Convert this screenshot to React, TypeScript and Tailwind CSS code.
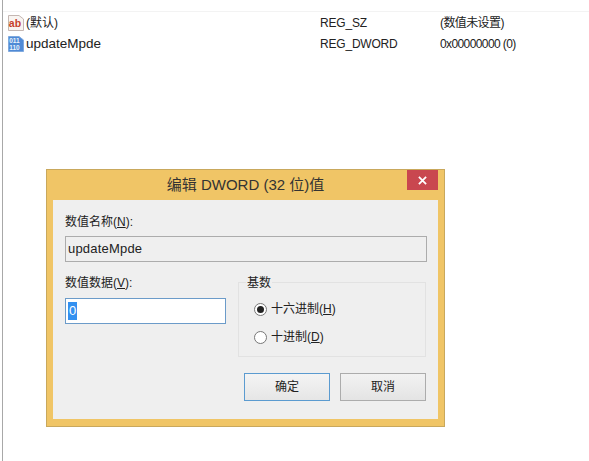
const FONT = "font-['Liberation_Sans','Noto_Sans_CJK_SC',sans-serif]";

function StringIcon() {
  return (
    <svg viewBox="0 0 16 16" className="h-[16px] w-[16px] shrink-0">
      <path d="M0.5 0.5H11L15.5 4V15.5H0.5Z" fill="#f8f4f1" stroke="#c4b7b2" />
      <text x="0.8" y="11.5" fontSize="10.5" fontWeight="700" fill="#c63f2a" fontFamily="Liberation Sans">
        ab
      </text>
    </svg>
  );
}

function BinaryIcon() {
  return (
    <svg viewBox="0 0 16 16" className="h-[16px] w-[16px] shrink-0">
      <path d="M0.5 0.5H11L15.5 4V15.5H0.5Z" fill="#4f8ad6" stroke="#7fa9de" />
      <text x="1.2" y="7" fontSize="6.5" fontWeight="700" fill="#eaf2fb" fontFamily="Liberation Sans">
        011
      </text>
      <text x="1.2" y="13.5" fontSize="6.5" fontWeight="700" fill="#eaf2fb" fontFamily="Liberation Sans">
        110
      </text>
    </svg>
  );
}

function ValueRow({ icon, name, type, data, nameClass }: { icon: React.ReactNode; name: string; type: string; data: string; nameClass: string }) {
  return (
    <div className="flex h-[21px] items-center text-[12px] text-[#222]">
      <div className="flex w-[317px] items-center gap-[2px] pl-[5px]">
        {icon}
        <span className={nameClass}>{name}</span>
      </div>
      <span className="w-[120px] tracking-[-0.2px]">{type}</span>
      <span className="tracking-[-0.6px]">{data}</span>
    </div>
  );
}

function Radio({ checked, label, hotkey }: { checked?: boolean; label: string; hotkey: string }) {
  return (
    <div className="flex h-[28px] items-center gap-[4px] text-[12px] text-[#222]">
      <span className="flex h-[13px] w-[13px] items-center justify-center rounded-full border border-[#777] bg-white">
        {checked && <span className="h-[7px] w-[7px] rounded-full bg-[#222]" />}
      </span>
      <span>
        {label}(<span className="underline">{hotkey}</span>)
      </span>
    </div>
  );
}

export default function App() {
  return (
    <div className={`${FONT} h-[461px] w-[589px] overflow-hidden bg-white`}>
      <div className="ml-[2px] h-full border-l border-[#a8a8a8] pt-[11px]">
        <div className="h-px bg-[#f3f3f3]" />
        <ValueRow icon={<StringIcon />} nameClass="mt-px text-[12px]" name="(默认)" type="REG_SZ" data="(数值未设置)" />
        <ValueRow icon={<BinaryIcon />} nameClass="mt-px text-[13.5px]" name="updateMpde" type="REG_DWORD" data="0x00000000 (0)" />

        {/* dialog */}
        <div className="ml-[43px] mt-[115px] flex h-[258px] w-[399px] flex-col border border-[#c9a85c] bg-[#f0c566] px-[6px] pb-[7px]">
          <div className="relative flex h-[30px] shrink-0 items-center justify-center text-[15px] text-[#333]">
            编辑 DWORD (32 位)值
            <button className="absolute right-[0px] top-0 flex h-[20px] w-[31px] items-center justify-center bg-[#c9474f]">
              <svg viewBox="0 0 10 10" className="h-[9px] w-[9px]">
                <path d="M1 1L9 9M9 1L1 9" stroke="#fff" strokeWidth="2" />
              </svg>
            </button>
          </div>
          <div className="flex flex-1 flex-col bg-[#efefef] px-[12px] pt-[14px] text-[12px] text-[#222]">
            <div className="h-[16px] leading-[16px]">
              数值名称(<span className="underline">N</span>):
            </div>
            <div className="mt-[6px] flex h-[26px] w-[362px] items-center border border-[#acacac] bg-[#efefef] px-[2px] text-[13px] tracking-[0.2px]">
              updateMpde
            </div>

            <div className="mt-[13px] flex">
              <div className="w-[173px]">
                <div className="h-[16px] leading-[16px]">
                  数值数据(<span className="underline">V</span>):
                </div>
                <div className="mt-[7px] flex h-[26px] w-[161px] items-center border border-[#6b9bc9] bg-white px-[2px]">
                  <span className="bg-[#3390f0] px-[1px] text-[13px] leading-[18px] text-white">0</span>
                </div>
              </div>
              <div className="relative mt-[7px] h-[75px] w-[188px] border border-[#e2e2e2] pl-[15px] pt-[12px]">
                <span className="absolute left-[7px] top-[-8px] bg-[#efefef] px-px leading-[16px]">基数</span>
                <Radio checked label="十六进制" hotkey="H" />
                <Radio label="十进制" hotkey="D" />
              </div>
            </div>

            <div className="mt-[16px] flex w-[361px] justify-end gap-[10px]">
              <button className="h-[28px] w-[86px] border border-[#5b9bd0] bg-gradient-to-b from-[#f4f4f4] to-[#e6e6e6] text-[12px] text-[#222]">
                确定
              </button>
              <button className="h-[28px] w-[86px] border border-[#acacac] bg-gradient-to-b from-[#f2f2f2] to-[#e4e4e4] text-[12px] text-[#222]">
                取消
              </button>
            </div>
          </div>
        </div>
      </div>
    </div>
  );
}
